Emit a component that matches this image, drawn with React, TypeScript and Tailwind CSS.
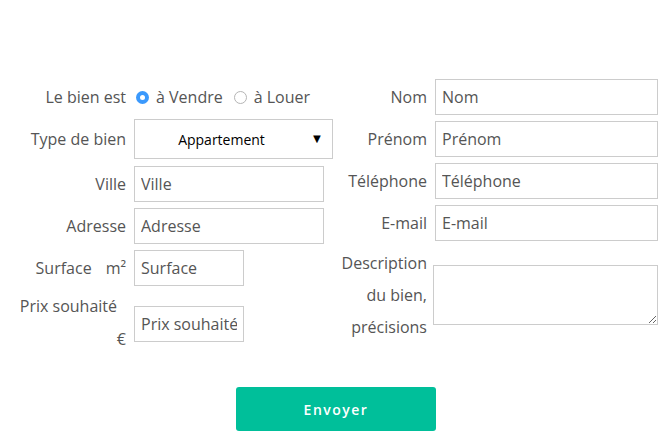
import React from "react";

const font = { fontFamily: '"Open Sans", "Liberation Sans", sans-serif' };

function Input({ placeholder, w }: { placeholder: string; w: string }) {
  return (
    <input
      placeholder={placeholder}
      className={`${w} h-[36px] border border-[#cccccc] px-[6px] text-[16px] text-[#555] placeholder:text-[#555] outline-none bg-white`}
      style={font}
    />
  );
}

function Radio({ checked }: { checked?: boolean }) {
  return checked ? (
    <span className="w-[13px] h-[13px] shrink-0 rounded-full bg-[#3b99fc] flex items-center justify-center">
      <span className="w-[5px] h-[5px] rounded-full bg-white" />
    </span>
  ) : (
    <span className="block w-[13px] h-[13px] shrink-0 rounded-full border border-[#b5b5b5] bg-white" />
  );
}

export default function App() {
  return (
    <div className="w-[672px] h-[443px] bg-white text-[#555] text-[16px]" style={font}>
      <div className="flex pt-[79px]">
        {/* Left column */}
        <div className="w-[335px] flex flex-col">
          <div className="flex items-center h-[36px]">
            <div className="w-[126px] text-right">Le bien est</div>
            <div className="ml-[10px] flex items-center">
              <Radio checked />
              <span className="ml-[7px]">à Vendre</span>
              <span className="ml-[11px] flex items-center"><Radio /></span>
              <span className="ml-[7px]">à Louer</span>
            </div>
          </div>
          <div className="flex items-center mt-[4px] h-[40px]">
            <div className="w-[126px] text-right">Type de bien</div>
            <div className="ml-[8px] w-[199px] h-[40px] border border-[#cccccc] flex items-center bg-white text-black text-[14px]">
              <span className="flex-1 text-center pl-[2px]">Appartement</span>
              <span className="w-[22px] text-[13px] mr-[4px] text-center">▼</span>
            </div>
          </div>
          <div className="flex items-center mt-[7px]">
            <div className="w-[126px] text-right">Ville</div>
            <div className="ml-[8px]"><Input placeholder="Ville" w="w-[190px]" /></div>
          </div>
          <div className="flex items-center mt-[6px]">
            <div className="w-[126px] text-right">Adresse</div>
            <div className="ml-[8px]"><Input placeholder="Adresse" w="w-[190px]" /></div>
          </div>
          <div className="flex items-center mt-[6px]">
            <div className="w-[126px] text-right">
              Surface<span className="ml-[14px]">m²</span>
            </div>
            <div className="ml-[8px]"><Input placeholder="Surface" w="w-[110px]" /></div>
          </div>
          <div className="flex items-start mt-[4px]">
            <div className="w-[126px] text-right leading-[33px]">
              <div className="pr-[9px]">Prix souhaité</div>
              <div>€</div>
            </div>
            <div className="ml-[8px] mt-[16px]"><Input placeholder="Prix souhaité" w="w-[110px]" /></div>
          </div>
        </div>
        {/* Right column */}
        <div className="flex flex-col">
          <div className="flex items-center">
            <div className="w-[92px] text-right">Nom</div>
            <div className="ml-[8px]"><Input placeholder="Nom" w="w-[223px]" /></div>
          </div>
          <div className="flex items-center mt-[6px]">
            <div className="w-[92px] text-right">Prénom</div>
            <div className="ml-[8px]"><Input placeholder="Prénom" w="w-[223px]" /></div>
          </div>
          <div className="flex items-center mt-[6px]">
            <div className="w-[92px] text-right">Téléphone</div>
            <div className="ml-[8px]"><Input placeholder="Téléphone" w="w-[223px]" /></div>
          </div>
          <div className="flex items-center mt-[6px]">
            <div className="w-[92px] text-right">E-mail</div>
            <div className="ml-[8px]"><Input placeholder="E-mail" w="w-[223px]" /></div>
          </div>
          <div className="flex items-start mt-[6px]">
            <div className="w-[92px] text-right leading-[32px]">
              Description<br />du bien,<br />précisions
            </div>
            <textarea
              className="ml-[6px] mt-[18px] w-[225px] h-[60px] border border-[#cccccc] bg-white outline-none block"
              style={font}
            />
          </div>
        </div>
      </div>
      <div className="flex justify-center mt-[31px]">
        <button
          className="w-[200px] h-[44px] rounded-[3px] bg-[#00bf9a] text-white text-[14px] font-semibold tracking-[1.5px]"
          style={font}
        >
          Envoyer
        </button>
      </div>
    </div>
  );
}
